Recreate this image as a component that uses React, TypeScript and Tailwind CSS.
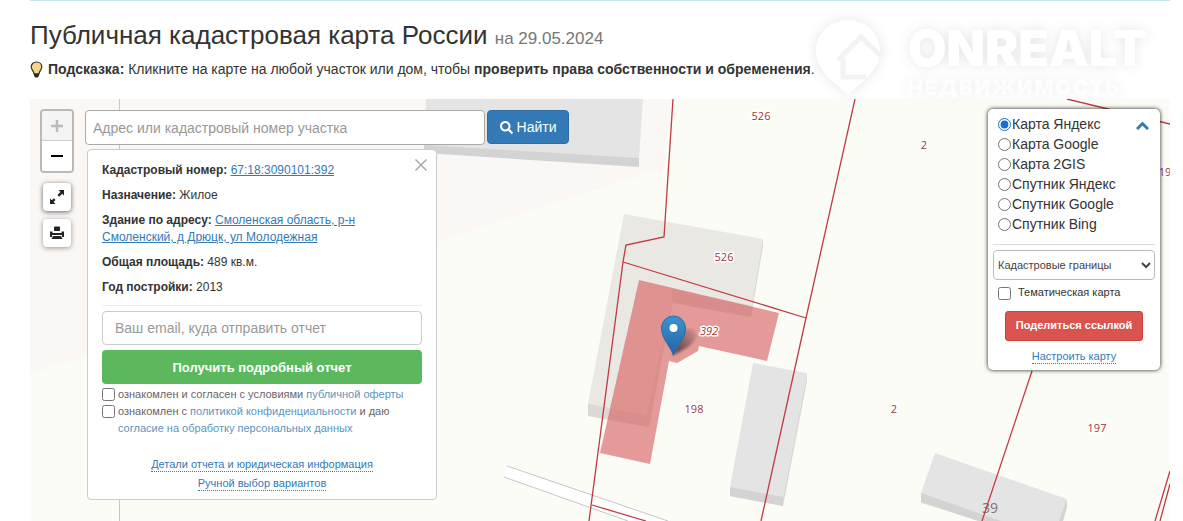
import React, { useState } from 'react';
import { FaSearch } from 'react-icons/fa';

const LAYERS = [
  'Карта Яндекс',
  'Карта Google',
  'Карта 2GIS',
  'Спутник Яндекс',
  'Спутник Google',
  'Спутник Bing',
];

interface ParcelLabel {
  x: number;
  y: number;
  text: string;
  italic?: boolean;
}

const LABELS: ParcelLabel[] = [
  { x: 761, y: 120, text: '526' },
  { x: 924, y: 149, text: '2' },
  { x: 724, y: 261, text: '526' },
  { x: 709, y: 335, text: '392', italic: true },
  { x: 694, y: 413, text: '198' },
  { x: 894, y: 413, text: '2' },
  { x: 1097, y: 432, text: '197' },
  { x: 1165, y: 176, text: '19' },
];

const BORDERS = [
  'M673 99 L664 237 L626 245 L623 262 L589 521',
  'M623 262 L806 318',
  'M855 99 L806 318 L761 521',
  'M592 505 L646 521',
  'M1067 99 L1170 124',
  'M1032 371 L982 521',
  'M1170 471 L1155 521',
  'M1170 484 L1160 521',
];

export default function App() {
  return (
    <div className="relative min-h-screen overflow-hidden bg-white pl-[30px] pr-[13px] font-['Liberation_Sans',Arial,sans-serif] text-sm text-[#333]">
      <div className="h-px bg-[#c9e4ea]" />
      <h1 className="pt-4 text-[26px] leading-9">
        Публичная кадастровая карта России <small className="text-[17px] leading-none text-[#777]">на 29.05.2024</small>
      </h1>
      <p className="mt-2 flex h-4 items-center gap-[5px] leading-4">
        <BulbIcon />
        <span>
          <b>Подсказка:</b> Кликните на карте на любой участок или дом, чтобы{' '}
          <b>проверить права собственности и обременения</b>.
        </span>
      </p>
      <main className="relative mt-[22px] h-[422px] overflow-hidden bg-[#fcfcf6]">
        <MapDrawing />
        <div className="relative flex items-start pl-[11px] pr-[10px] pt-[10px]">
          <MapTools />
          <div className="ml-3 flex flex-col">
            <SearchForm />
            <ObjectCard />
          </div>
          <LayerPanel />
        </div>
      </main>
      <Watermark />
    </div>
  );
}

const MapTools: React.FC = () => (
  <div className="flex w-8 flex-col items-center gap-2">
    <div className="mb-[2px] w-[34px] overflow-hidden rounded border-2 border-black/25">
      <button aria-label="Приблизить" className="flex h-[30px] w-full items-center justify-center border-b border-[#ccc] bg-[#f4f4f4] text-[#bbb]">
        <svg width="14" height="14" viewBox="0 0 14 14" stroke="currentColor" strokeWidth="2.500">
          <path d="M1 7h12M7 1v12" />
        </svg>
      </button>
      <button aria-label="Отдалить" className="flex h-[30px] w-full items-center justify-center bg-white text-black">
        <svg width="14" height="14" viewBox="0 0 14 14" stroke="currentColor" strokeWidth="2">
          <path d="M1 7h12" />
        </svg>
      </button>
    </div>
    <button aria-label="Во весь экран" className="flex h-7 w-7 items-center justify-center rounded bg-white shadow-[0_1px_5px_rgba(0,0,0,0.6)]">
      <svg width="14" height="14" viewBox="0 0 14 14" fill="#222">
        <path d="M8.500 0H14v5.500l-1.800-1.800-3 3-1.700-1.700 3-3zM5.500 14H0V8.500l1.800 1.800 2-2 1.700 1.700-2 2z" />
      </svg>
    </button>
    <button aria-label="Печать" className="flex h-7 w-7 items-center justify-center rounded bg-white shadow-[0_1px_5px_rgba(0,0,0,0.4)]">
      <svg width="14" height="14" viewBox="0 0 14 14" fill="#222">
        <path d="M4 1.500Q4 .5 5 .5h4q1 0 1 1V5H4zM0 5.500h2.500V7h9V5.500H14V11h-2V9H2v2H0zM3 10h8l1.500 3h-11z" />
      </svg>
    </button>
  </div>
);

const SearchForm: React.FC = () => (
  <form className="flex gap-[2px] pt-px" onSubmit={(e) => e.preventDefault()}>
    <input
      type="text"
      aria-label="Адрес или кадастровый номер участка"
      placeholder="Адрес или кадастровый номер участка"
      className="h-[35px] w-[400px] rounded border border-[#aaa] bg-white px-[7px] placeholder:text-[#999]"
    />
    <button className="flex h-[34px] w-[82px] items-center justify-center gap-1 rounded border border-[#2e6da4] bg-[#337ab7] text-white">
      <FaSearch size={13} />
      Найти
    </button>
  </form>
);

const ObjectCard: React.FC = () => (
  <section className="relative ml-[2px] mt-1 w-[350px] rounded border border-[#ccc] bg-white px-[14px] pb-2 pt-3 text-xs leading-[17px]">
    <button aria-label="Закрыть" className="absolute right-2 top-2 text-[#aaa]">
      <svg width="14" height="14" viewBox="0 0 14 14" stroke="currentColor" strokeWidth="1.500">
        <path d="M1.500 1.500l11 11M12.500 1.500l-11 11" />
      </svg>
    </button>
    <div className="flex flex-col gap-2">
      <p>
        <b>Кадастровый номер:</b> <a href="#" className="text-[#337ab7] underline">67:18:3090101:392</a>
      </p>
      <p><b>Назначение:</b> Жилое</p>
      <p>
        <b>Здание по адресу:</b>{' '}
        <a href="#" className="text-[#337ab7] underline">
          Смоленская область, р-н<br />Смоленский, д Дрюцк, ул Молодежная
        </a>
      </p>
      <p><b>Общая площадь:</b> 489 кв.м.</p>
      <p><b>Год постройки:</b> 2013</p>
    </div>
    <hr className="mb-[5px] mt-[9px] border-[#eee]" />
    <input
      type="email"
      aria-label="Ваш email, куда отправить отчет"
      placeholder="Ваш email, куда отправить отчет"
      className="h-[34px] w-full rounded border border-[#ccc] px-3 text-sm placeholder:text-[#999]"
    />
    <button className="mt-[5px] h-[34px] w-full rounded bg-[#5cb85c] text-[13px] font-bold text-white">
      Получить подробный отчет
    </button>
    <div className="mt-[2px] text-[11px] text-[#666]">
      <div className="flex items-start gap-[3px]">
        <input id="offer" type="checkbox" className="mt-[2px] h-[13px] w-[13px]" />
        <label htmlFor="offer">
          ознакомлен и согласен с условиями <a href="#" className="text-[#5b95bf]">публичной оферты</a>
        </label>
      </div>
      <div className="flex items-start gap-[3px]">
        <input id="privacy" type="checkbox" className="mt-[2px] h-[13px] w-[13px]" />
        <label htmlFor="privacy">
          ознакомлен с <a href="#" className="text-[#5b95bf]">политикой конфиденциальности</a> и даю<br />
          <a href="#" className="text-[#5b95bf]">согласие на обработку персональных данных</a>
        </label>
      </div>
    </div>
    <div className="mt-5 flex flex-col items-center gap-1 text-[11px] leading-[14px] text-[#337ab7]">
      <a href="#" className="border-b border-dotted border-[#337ab7]">Детали отчета и юридическая информация</a>
      <a href="#" className="border-b border-dotted border-[#337ab7]">Ручной выбор вариантов</a>
    </div>
  </section>
);

const LayerPanel: React.FC = () => {
  const [layer, setLayer] = useState(LAYERS[0]);

  return (
    <aside className="relative ml-auto w-[172px] rounded-[5px] bg-white px-[5px] pb-[6px] pt-[5px] shadow-[0_0_4px_rgba(0,0,0,0.9)]">
      <button aria-label="Свернуть" className="absolute right-[11px] top-3 text-[#337ab7]">
        <svg width="13" height="9" viewBox="0 0 13 9" fill="none" stroke="currentColor" strokeWidth="3">
          <path d="M1 8l5.500-5.500L12 8" />
        </svg>
      </button>
      <div className="pl-[5px]">
        {LAYERS.map((name) => (
          <label key={name} className="flex h-5 items-center gap-px">
            <input
              type="radio"
              name="layer"
              checked={layer === name}
              onChange={() => setLayer(name)}
              className="h-[13px] w-[13px] accent-[#1070d0]"
            />
            {name}
          </label>
        ))}
      </div>
      <hr className="mb-[5px] mt-[10px] border-[#ddd]" />
      <select aria-label="Слой" className="h-[30px] w-full rounded border border-[#bbb] bg-white text-[11px] text-[#444]">
        <option>Кадастровые границы</option>
      </select>
      <label className="mt-1 flex h-[18px] items-center gap-[7px] pl-[5px] text-[11px]">
        <input type="checkbox" className="h-[13px] w-[13px]" />
        Тематическая карта
      </label>
      <div className="flex flex-col items-center">
        <button className="mt-[9px] h-[30px] w-[138px] rounded-[3px] border border-[#d43f3a] bg-[#d9534f] text-[11px] font-bold text-white">
          Поделиться ссылкой
        </button>
        <a href="#" className="mt-[9px] border-b border-dotted border-[#337ab7] text-[11px] leading-[13px] text-[#337ab7]">
          Настроить карту
        </a>
      </div>
    </aside>
  );
};

const BulbIcon: React.FC = () => (
  <svg width="13" height="17" viewBox="0 0 13 17" className="shrink-0" aria-hidden="true">
    <path d="M6.500 1C3.300 1 1.200 3.300 1.200 6c0 2.500 2.600 3.800 2.800 7h5c.2-3.200 2.800-4.500 2.800-7 0-2.700-2.100-5-5.300-5z" fill="#f8d583" stroke="#33302a" strokeWidth="1.200" />
    <path d="M4 12.500h5v2.300L7.800 16.500H5.200L4 14.800z" fill="#2b2b2b" />
  </svg>
);

const MapDrawing: React.FC = () => (
  <svg className="absolute inset-0 h-full w-full" viewBox="30 99 1140 422" preserveAspectRatio="xMinYMin slice" aria-hidden="true">
    <path d="M30 99H672L664 168L30 374Z" fill="#faf7f5" />
    <path d="M119.500 99V521" stroke="#c6c6c6" />

    <path d="M507 466L668 521H628L504 477Z" fill="#fff" />
    <path d="M507 466L668 521M504 477L628 521" stroke="#b5b9bb" strokeWidth=".8" />

    {/* buildings: roof first, then the shaded walls */}
    <path d="M426 99H643L639 158L424 146Z" fill="#e4e4e4" />
    <path d="M424 145L639 158V167L424 153Z" fill="#d3d3d3" />

    <path d="M624 214L763 239L751 317L673 303L649 427L588 416V404Z" fill="#eae8e3" />
    <path d="M763 239V246L752 311L750 317L752 304Z" fill="#dad9d6" />
    <path d="M588 404L651 416L649 427L588 416Z" fill="#dcdad6" />
    <path d="M673 296L663 350L649 427L644 425Z" fill="#dedcd8" />
    <path d="M671 289L753 306L751 317L673 303Z" fill="#dad8d4" />

    <path d="M753 363L807 373L783 497V506L730 496V487Z" fill="#e4e4e4" />
    <path d="M807 373V381L783 506V497Z" fill="#d8d8d8" />
    <path d="M730 487L783 497V506L730 496Z" fill="#d3d3d3" />

    <path d="M935 453L1067 499L1063 521H980L921 503V493Z" fill="#e4e4e4" />
    <path d="M921 493L1001 521H978L921 502Z" fill="#d3d3d3" />
    <path d="M1067 499V507L1063 521H1059Z" fill="#d3d3d3" />

    <path
      d="M639 280L779 313L767 361L699 346L698 351L677 363L669 361L650 464L600 453Z"
      fill="#d76565"
      fillOpacity=".65"
    />

    <text x="990" y="513" textAnchor="middle" fontSize="14" fill="#777" fontFamily="'Open Sans', sans-serif">39</text>
    {BORDERS.map((d) => (
      <path key={d} d={d} fill="none" stroke="#c03a40" strokeWidth="1.300" />
    ))}

    <g fontFamily="'Open Sans', sans-serif" fontSize="11" fill="#a03540" stroke="#fff" strokeWidth="3" strokeLinejoin="round" paintOrder="stroke">
      {LABELS.map((label) => (
        <text key={`${label.x}-${label.y}`} x={label.x} y={label.y} textAnchor="middle" fontStyle={label.italic ? 'italic' : 'normal'}>
          {label.text}
        </text>
      ))}
    </g>

    <defs>
      <linearGradient id="pin" x1="0" y1="0" x2="0" y2="1">
        <stop offset="0" stopColor="#3d93cf" />
        <stop offset="1" stopColor="#2463a2" />
      </linearGradient>
      <linearGradient id="pinShadow" x1="0" y1="1" x2="1" y2="0">
        <stop offset="0" stopOpacity=".65" />
        <stop offset="1" stopOpacity=".05" />
      </linearGradient>
      <filter id="soft" x="-30%" y="-30%" width="160%" height="160%">
        <feGaussianBlur stdDeviation="1.500" />
      </filter>
    </defs>
    <path d="M673 355L682 332C687 326 697 329 696 336C695 344 684 350 673 355Z" fill="url(#pinShadow)" filter="url(#soft)" />
    <path
      d="M673.500 355.500C671 347 661.500 339 661.500 328A12 12 0 0 1 685.500 328C685.500 339 676 347 673.500 355.500Z"
      fill="url(#pin)"
      stroke="#2a6dab"
    />
    <circle cx="673.500" cy="328" r="4" fill="#fff" />
  </svg>
);

const Watermark: React.FC = () => (
  <div className="pointer-events-none absolute right-9 top-4 flex items-start gap-5 text-white drop-shadow-[0_0_6px_rgba(0,0,0,0.1)]" aria-hidden="true">
    <svg width="76" height="84" viewBox="0 0 76 84">
      <path d="M36 4C17 4 4 18 4 35c0 20 18 31 32 44 14-13 32-24 32-44C68 18 55 4 36 4z" fill="#fff" />
      <path d="M26 44L49 21L69 40M31 42V61H54" fill="none" stroke="#f3f3f3" strokeWidth="5" />
    </svg>
    <div className="pt-1 font-['Inter',sans-serif] font-black">
      <div className="text-[50px] leading-[56px]">ONREALT</div>
      <div className="text-[20px] leading-6 tracking-widest opacity-70">НЕДВИЖИМОСТЬ</div>
    </div>
  </div>
);
